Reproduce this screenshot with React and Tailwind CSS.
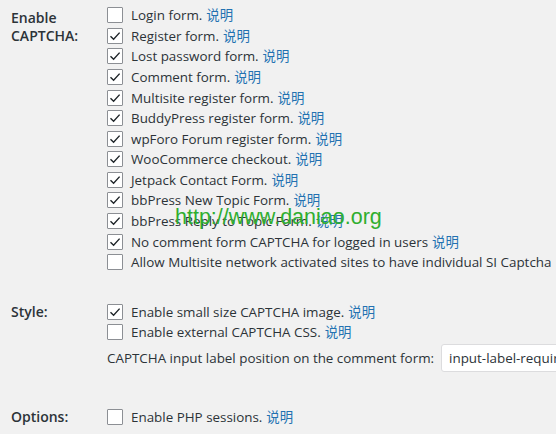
import React from "react";

const Check = ({ checked }) => (
  <span className="w-4 h-4 shrink-0 border border-[#8c8f94] bg-white flex items-center justify-center rounded-[1px]">
    {checked && (
      <svg width="12" height="12" viewBox="0 0 12 12">
        <path d="M1.5 6.2 L4.6 9.2 L10.6 2.6" fill="none" stroke="#1d2327" strokeWidth="1.4" />
      </svg>
    )}
  </span>
);

const Row = ({ checked, text, link = true }) => (
  <div className="h-[20.58px] flex items-center gap-2 whitespace-nowrap">
    <Check checked={checked} />
    <span>
      {text}
      {link && <span className="text-[#2271b1] ml-1">说明</span>}
    </span>
  </div>
);

const captchaRows = [
  [false, "Login form."],
  [true, "Register form."],
  [true, "Lost password form."],
  [true, "Comment form."],
  [true, "Multisite register form."],
  [true, "BuddyPress register form."],
  [true, "wpForo Forum register form."],
  [true, "WooCommerce checkout."],
  [true, "Jetpack Contact Form."],
  [true, "bbPress New Topic Form."],
  [true, "bbPress Reply to Topic Form."],
  [true, "No comment form CAPTCHA for logged in users"],
  [false, "Allow Multisite network activated sites to have individual SI Captcha", false],
];

export default function App() {
  return (
    <div
      className="relative w-[556px] h-[434px] overflow-hidden bg-[#f1f1f1] text-[#2c3338] text-[13.4px]"
      style={{ fontFamily: '"Open Sans", "Noto Sans CJK SC", sans-serif' }}
    >
      <div className="flex pt-[5px]">
        <div className="w-[107px] shrink-0 pl-[11px] font-semibold text-[14px] leading-[18px] pt-[4px]">
          Enable
          <br />
          CAPTCHA:
        </div>
        <div className="flex flex-col">
          {captchaRows.map(([c, t, l], i) => (
            <Row key={i} checked={c} text={t} link={l !== false} />
          ))}
        </div>
      </div>

      <div className="flex mt-[29px]">
        <div className="w-[107px] shrink-0 pl-[11px] font-semibold text-[14px] h-[20px] flex items-center">Style:</div>
        <div className="flex flex-col min-w-0">
          <Row checked={true} text="Enable small size CAPTCHA image." />
          <Row checked={false} text="Enable external CAPTCHA CSS." />
          <div className="flex items-center mt-[1px] h-[28px] whitespace-nowrap">
            <span className="shrink-0">CAPTCHA input label position on the comment form:</span>
            <div className="ml-[7px] h-[28px] w-[160px] shrink-0 bg-white border border-[#dcdcde] rounded-[3px] flex items-center pl-[7px] overflow-hidden">
              input-label-required-after
            </div>
          </div>
        </div>
      </div>

      <div className="flex mt-[35px]">
        <div className="w-[107px] shrink-0 pl-[11px] font-semibold text-[14px] h-[20px] flex items-center">Options:</div>
        <div className="flex flex-col">
          <Row checked={false} text="Enable PHP sessions." />
        </div>
      </div>

      <div
        className="absolute left-[175px] top-[201px] text-[21.5px] text-[#2fae2f] whitespace-nowrap"
        style={{ fontFamily: '"Liberation Sans", Arial, sans-serif' }}
      >
        http://www.daniao.org
      </div>
    </div>
  );
}
